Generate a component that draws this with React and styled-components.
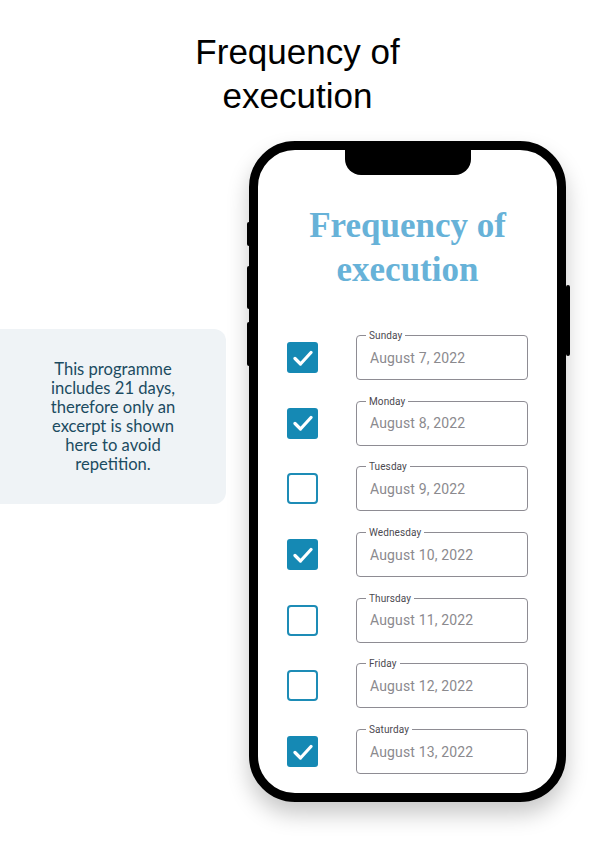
import React from "react";
import styled, { createGlobalStyle } from "styled-components";

const Global = createGlobalStyle`
  body {
    margin: 0;
    background: #ffffff;
    font-family: "Liberation Sans", Arial, sans-serif;
  }
`;

const Page = styled.div`
  width: 595px;
  height: 843px;
  overflow: hidden;
  display: flex;
  flex-direction: column;
  align-items: center;
`;

const Heading = styled.h1`
  margin: 30px 0 0;
  font-family: "Liberation Sans", Arial, sans-serif;
  font-weight: 400;
  font-size: 35px;
  line-height: 44px;
  color: #000;
  text-align: center;
`;

const Main = styled.div`
  align-self: stretch;
  display: flex;
  align-items: flex-start;
  margin-top: 23px;
`;

const Note = styled.div`
  width: 226px;
  height: 175px;
  margin-top: 188px;
  flex-shrink: 0;
  background: #eff3f6;
  border-radius: 0 12px 12px 0;
  display: flex;
  align-items: center;
  justify-content: center;
  text-align: center;
  font-family: Lato, "Open Sans", sans-serif;
  font-size: 16.6px;
  line-height: 19px;
  color: #1b4b61;
`;

const Phone = styled.div`
  position: relative;
  margin-left: 23px;
  width: 317px;
  height: 661px;
  box-sizing: border-box;
  border: 9px solid #000;
  border-radius: 46px;
  background: #fff;
  box-shadow: 0 12px 22px rgba(0, 0, 0, 0.22);
  display: flex;
  flex-direction: column;
`;

const SideButton = styled.span`
  position: absolute;
  width: 4px;
  background: #000;
  border-radius: 2px;
  top: ${(p) => p.$top}px;
  height: ${(p) => p.$h}px;
  ${(p) => (p.$right ? "right: -13px;" : "left: -11px;")}
`;

const Notch = styled.div`
  position: absolute;
  top: -1px;
  left: 50%;
  transform: translateX(-50%);
  width: 126px;
  height: 26px;
  background: #000;
  border-radius: 0 0 16px 16px;
`;

const Title = styled.h2`
  margin: 54px 0 0;
  font-family: "Liberation Serif", "Times New Roman", serif;
  font-weight: 700;
  font-size: 35px;
  line-height: 44px;
  color: #67b2d8;
  text-align: center;
`;

const List = styled.div`
  margin-top: 43px;
  padding: 0 29px;
  display: flex;
  flex-direction: column;
  gap: 20.7px;
`;

const Row = styled.div`
  display: flex;
  align-items: center;
  gap: 38px;
`;

const Box = styled.div`
  width: 31px;
  height: 31px;
  box-sizing: border-box;
  border-radius: ${(p) => (p.$checked ? "3px" : "4px")};
  background: ${(p) => (p.$checked ? "#1589b4" : "#fff")};
  border: ${(p) => (p.$checked ? "none" : "2px solid #1d8cb6")};
  display: flex;
  align-items: center;
  justify-content: center;
`;

const Field = styled.div`
  position: relative;
  width: 172px;
  height: 45px;
  box-sizing: border-box;
  border: 1px solid #8e8c93;
  border-radius: 4px;
  display: flex;
  align-items: center;
  padding-left: 13px;
  font-family: Roboto, "Liberation Sans", sans-serif;
  font-size: 14px;
  letter-spacing: 0.15px;
  color: #8b8a8e;
`;

const Label = styled.span`
  position: absolute;
  top: -7px;
  left: 9px;
  padding: 0 3px;
  background: #fff;
  font-family: Roboto, "Liberation Sans", sans-serif;
  font-size: 10px;
  line-height: 14px;
  letter-spacing: 0.1px;
  color: #4b4950;
`;

const Check = () => (
  <svg width="20" height="16" viewBox="0 0 20 16">
    <path
      d="M2 8.5 L7.5 14 L18 2.5"
      fill="none"
      stroke="#fff"
      strokeWidth="3.2"
      strokeLinecap="round"
      strokeLinejoin="round"
    />
  </svg>
);

const days = [
  { day: "Sunday", date: "August 7, 2022", on: true },
  { day: "Monday", date: "August 8, 2022", on: true },
  { day: "Tuesday", date: "August 9, 2022", on: false },
  { day: "Wednesday", date: "August 10, 2022", on: true },
  { day: "Thursday", date: "August 11, 2022", on: false },
  { day: "Friday", date: "August 12, 2022", on: false },
  { day: "Saturday", date: "August 13, 2022", on: true },
];

export default function App() {
  return (
    <Page>
      <Global />
      <Heading>
        Frequency of
        <br />
        execution
      </Heading>
      <Main>
        <Note>
          <div>
            This programme
            <br />
            includes 21 days,
            <br />
            therefore only an
            <br />
            excerpt is shown
            <br />
            here to avoid
            <br />
            repetition.
          </div>
        </Note>
        <Phone>
          <SideButton $top={72} $h={24} />
          <SideButton $top={116} $h={43} />
          <SideButton $top={172} $h={44} />
          <SideButton $right $top={135} $h={71} />
          <Notch />
          <Title>
            Frequency of
            <br />
            execution
          </Title>
          <List>
            {days.map((d) => (
              <Row key={d.day}>
                <Box $checked={d.on}>{d.on && <Check />}</Box>
                <Field>
                  <Label>{d.day}</Label>
                  {d.date}
                </Field>
              </Row>
            ))}
          </List>
        </Phone>
      </Main>
    </Page>
  );
}
